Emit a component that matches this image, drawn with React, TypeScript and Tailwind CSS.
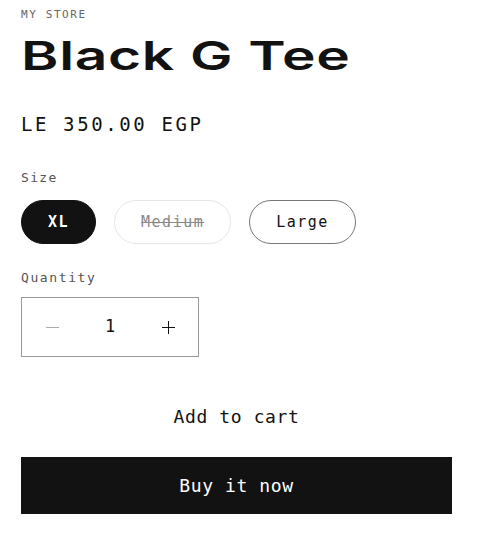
import { useState } from 'react'

const mono = "font-['DejaVu_Sans_Mono',monospace]"

const sizes = [
  { label: 'XL', soldOut: false },
  { label: 'Medium', soldOut: true },
  { label: 'Large', soldOut: false },
]

export default function App() {
  const [size, setSize] = useState('XL')
  const [qty, setQty] = useState(1)

  return (
    <div className={`min-h-[550px] overflow-hidden bg-white pl-[21px] pr-[39px] pt-[8px] text-[#121212] ${mono}`}>
      <p className="text-[11px] uppercase leading-[14px] tracking-[1.6px] text-[#666]">My Store</p>

      {/* 제목 */}
      <h1 className="mt-[12px] w-fit origin-left scale-x-[1.42] whitespace-nowrap font-['Inter',sans-serif] text-[40px] font-semibold leading-[44px] tracking-[0.5px]">
        Black G Tee
      </h1>

      <p className="mt-[34px] text-[19px] leading-[24px] tracking-[2.6px]">LE 350.00 EGP</p>

      {/* 사이즈 */}
      <p className="mt-[34px] text-[13px] leading-[16px] tracking-[1.3px] text-[#555]">Size</p>
      <div className="mt-[14px] flex gap-[18px]">
        {sizes.map((item) => {
          const active = size === item.label
          return (
            <button
              key={item.label}
              type="button"
              onClick={() => !item.soldOut && setSize(item.label)}
              className={`h-[44px] rounded-full border px-[26px] text-[15px] tracking-[1.5px] ${
                active
                  ? 'border-[#121212] bg-[#121212] font-bold text-white'
                  : item.soldOut
                    ? 'border-[#e6e6e6] text-[#888] line-through'
                    : 'border-[#777] text-[#121212]'
              }`}
            >
              {item.label}
            </button>
          )
        })}
      </div>

      {/* 수량 */}
      <p className="mt-[26px] text-[13px] leading-[16px] tracking-[1.6px] text-[#555]">Quantity</p>
      <div className="mt-[11px] flex h-[60px] w-[178px] items-center border border-[#999]">
        <button
          type="button"
          onClick={() => setQty(Math.max(1, qty - 1))}
          className="flex h-full w-[60px] items-center justify-center"
        >
          <svg width="13" height="13" viewBox="0 0 13 13">
            <path d="M0 6.5h13" stroke="#aaa" strokeWidth="1" />
          </svg>
        </button>
        <span className="flex-1 text-center text-[17px]">{qty}</span>
        <button
          type="button"
          onClick={() => setQty(qty + 1)}
          className="flex h-full w-[60px] items-center justify-center"
        >
          <svg width="13" height="13" viewBox="0 0 13 13">
            <path d="M0 6.5h13M6.5 0v13" stroke="#121212" strokeWidth="1" />
          </svg>
        </button>
      </div>

      {/* 버튼 */}
      <div className="mt-[31px] flex flex-col gap-[12px]">
        <button type="button" className="h-[57px] w-full text-[18px] tracking-[0.6px]">
          Add to cart
        </button>
        <button type="button" className="h-[57px] w-full bg-[#121212] text-[18px] tracking-[0.6px] text-white">
          Buy it now
        </button>
      </div>
    </div>
  )
}
